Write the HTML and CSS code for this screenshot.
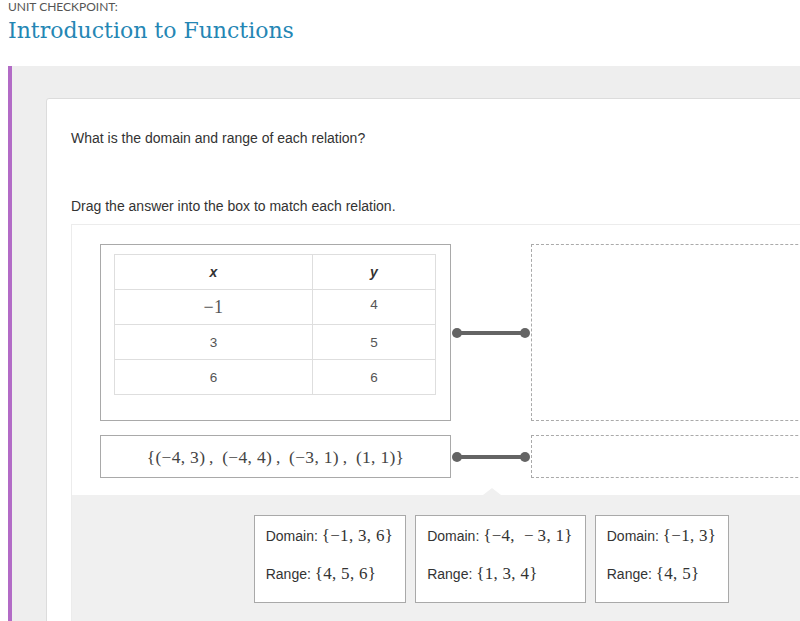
FILE: index.html
```html
<!DOCTYPE html>
<html>
<head>
  <link rel="stylesheet" href="styles.css">
</head>
<body>

  <div class="header">
    <div class="kicker">UNIT CHECKPOINT:</div>
    <h1 class="title">Introduction to Functions</h1>
  </div>

  <div class="panel">
    <div class="card">
      <p class="question">What is the domain and range of each relation?</p>
      <p class="instruction">Drag the answer into the box to match each relation.</p>

      <div class="interaction">
        <div class="matches">
          <div class="match-row">
            <div class="relation relation-table">
              <table>
                <tr>
                  <th class="col-x"><i>x</i></th>
                  <th class="col-y"><i>y</i></th>
                </tr>
                <tr>
                  <td><span class="math">&minus;1</span></td>
                  <td class="raised">4</td>
                </tr>
                <tr>
                  <td>3</td>
                  <td>5</td>
                </tr>
                <tr>
                  <td>6</td>
                  <td>6</td>
                </tr>
              </table>
            </div>
            <div class="connector"><span class="dot"></span><span class="bar"></span><span class="dot"></span></div>
            <div class="dropzone"></div>
          </div>

          <div class="match-row">
            <div class="relation relation-set">
              <span class="math">{(&minus;4, 3)&thinsp;, &thinsp;(&minus;4, 4)&thinsp;, &thinsp;(&minus;3, 1)&thinsp;, &thinsp;(1, 1)}</span>
            </div>
            <div class="connector"><span class="dot"></span><span class="bar"></span><span class="dot"></span></div>
            <div class="dropzone"></div>
          </div>
        </div>

        <div class="answers">
          <div class="answer">
            <div class="answer-line">Domain: <span class="math">{&minus;1, 3, 6}</span></div>
            <div class="answer-line">Range: <span class="math">{4, 5, 6}</span></div>
          </div>
          <div class="answer">
            <div class="answer-line">Domain: <span class="math">{&minus;4, &nbsp;&minus;&thinsp;3, 1}</span></div>
            <div class="answer-line">Range: <span class="math">{1, 3, 4}</span></div>
          </div>
          <div class="answer">
            <div class="answer-line">Domain: <span class="math">{&minus;1, 3}</span></div>
            <div class="answer-line">Range: <span class="math">{4, 5}</span></div>
          </div>
        </div>
      </div>
    </div>
  </div>

</body>
</html>
```

FILE: styles.css
```css
html, body {
  margin: 0;
  overflow: hidden;
  background-color: #fff;
  font-family: "Liberation Sans", Arial, sans-serif;
  color: #333;
}
.header {
  padding: 0 8px;
  height: 66px;
}
.kicker {
  font-family: Lato, "Liberation Sans", sans-serif;
  font-size: 12px;
  line-height: 13px;
  color: #555;
}
.title {
  margin: 4px 0 0;
  font-family: "DejaVu Serif", serif;
  font-weight: normal;
  font-size: 22px;
  line-height: 28px;
  color: #2486b4;
}
.panel {
  margin-left: 8px;
  border-left: 4px solid #b26bc6;
  background-color: #eeeeee;
  padding: 32px 0 0 34px;
  height: 600px;
}
.card {
  width: 840px;
  background-color: #fff;
  border: 1px solid #dcdcdc;
  border-radius: 3px;
  padding: 31px 24px 0;
  height: 600px;
}
.question, .instruction {
  margin: 0;
  font-size: 14px;
  line-height: 16px;
}
.question {
  margin-bottom: 52px;
}
.instruction {
  margin-bottom: 10px;
}
.interaction {
  border-top: 1px solid #ececec;
  border-left: 1px solid #ececec;
}
.matches {
  padding: 19px 28px 17px;
  display: flex;
  flex-direction: column;
  gap: 14px;
}
.match-row {
  display: flex;
  align-items: center;
}
.relation {
  width: 351px;
  box-sizing: border-box;
  border: 1px solid #a9a9a9;
  background-color: #fff;
}
.relation-table {
  height: 177px;
  padding: 9px 14px 0 13px;
}
.relation-set {
  height: 43px;
  display: flex;
  align-items: center;
  justify-content: center;
}
.relation-set .math {
  font-size: 17.5px;
  padding-top: 2px;
  color: #444;
}
table {
  width: 322px;
  border-collapse: collapse;
}
th, td {
  height: 34px;
  padding: 0;
  border: 1px solid #dedede;
  text-align: center;
  font-size: 13.5px;
  color: #555;
}
th {
  font-size: 14px;
  color: #333;
}
.col-x {
  width: 197px;
}
td.raised {
  vertical-align: top;
  height: 27px;
  padding-top: 7px;
}
.math {
  font-family: "Liberation Serif", "Times New Roman", serif;
  font-size: 17px;
  letter-spacing: 0.3px;
  color: #333;
}
td .math {
  font-size: 18px;
  color: #555;
}
.connector {
  width: 80px;
  box-sizing: border-box;
  padding: 0 1px;
  display: flex;
  align-items: center;
}
.dot {
  width: 10px;
  height: 10px;
  border-radius: 50%;
  background-color: #646464;
  flex: none;
}
.bar {
  flex: 1;
  height: 4px;
  margin: 0 -1px;
  background-color: #646464;
}
.dropzone {
  flex: 1;
  align-self: stretch;
  border: 1px dashed #aaa;
}
.answers {
  position: relative;
  background-color: #f0f0f0;
  padding: 20px 0 40px;
  display: flex;
  justify-content: center;
  gap: 9px;
}
.answers::before {
  content: "";
  position: absolute;
  top: -7px;
  left: 50%;
  margin-left: -9px;
  border-left: 9px solid transparent;
  border-right: 9px solid transparent;
  border-bottom: 7px solid #f0f0f0;
}
.answer {
  height: 88px;
  box-sizing: border-box;
  border: 1px solid #a9a9a9;
  background-color: #fff;
  padding: 9px 12px 0 11px;
  display: flex;
  flex-direction: column;
  gap: 16px;
}
.answer-line {
  font-size: 14px;
  line-height: 22px;
  white-space: nowrap;
}
```
